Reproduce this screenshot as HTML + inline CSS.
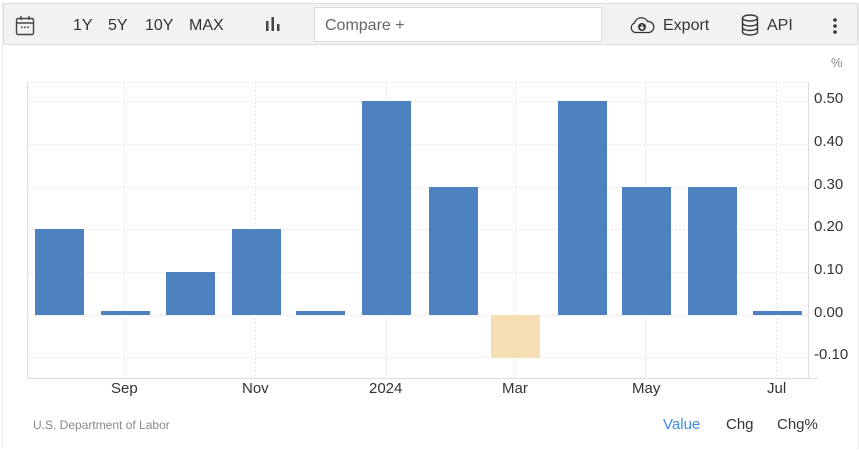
<!DOCTYPE html><html><head><style>
body{margin:0;width:859px;height:451px;background:#fff;font-family:"Liberation Sans",sans-serif;position:relative;overflow:hidden}
.t{position:absolute;font-size:15px;color:#333;white-space:nowrap}
</style></head><body>
<div style="position:absolute;left:2px;top:3px;width:855px;height:446px;border-left:1px solid #eee;border-right:1px solid #eee"></div>
<div style="position:absolute;left:3px;top:3px;width:853px;height:40px;background:#f2f2f2;border:1px solid #ddd"></div>
<svg style="position:absolute;left:15px;top:15px" width="20" height="22" viewBox="0 0 20 22"><rect x="1.5" y="3.5" width="17" height="16" rx="1.5" fill="none" stroke="#444" stroke-width="1.4"/><line x1="1.5" y1="8" x2="18.5" y2="8" stroke="#444" stroke-width="1.4"/><line x1="6" y1="1" x2="6" y2="5" stroke="#444" stroke-width="1.4"/><line x1="14" y1="1" x2="14" y2="5" stroke="#444" stroke-width="1.4"/><rect x="6" y="11.5" width="1.6" height="1.6" fill="#444"/><rect x="9.2" y="11.5" width="1.6" height="1.6" fill="#444"/><rect x="12.4" y="11.5" width="1.6" height="1.6" fill="#444"/></svg>
<div class="t" style="left:73px;top:17px;font-size:16px">1Y</div>
<div class="t" style="left:108px;top:17px;font-size:16px">5Y</div>
<div class="t" style="left:145px;top:17px;font-size:16px">10Y</div>
<div class="t" style="left:189px;top:17px;font-size:16px">MAX</div>
<svg style="position:absolute;left:265px;top:16px" width="16" height="16"><rect x="1" y="5" width="2.5" height="10" fill="#444"/><rect x="6.5" y="1" width="2.5" height="14" fill="#444"/><rect x="12" y="8" width="2.5" height="7" fill="#444"/></svg>
<div style="position:absolute;left:314px;top:7px;width:286px;height:33px;background:#fff;border:1px solid #ddd"></div>
<div class="t" style="left:325px;top:17px;font-size:16px;color:#666">Compare +</div>
<svg style="position:absolute;left:629px;top:16px" width="26" height="18" viewBox="0 0 26 18"><path d="M6 16.5 A5 5 0 0 1 5.5 7 A7 7 0 0 1 18.5 5.5 A5.5 5.5 0 0 1 20 16.5 Z" fill="none" stroke="#333" stroke-width="1.3"/><circle cx="13" cy="11" r="4" fill="#333"/><path d="M13 8.5v4M11 11l2 2 2-2" stroke="#fff" stroke-width="1.2" fill="none"/></svg>
<div class="t" style="left:663px;top:17px;font-size:16px">Export</div>
<svg style="position:absolute;left:741px;top:14px" width="18" height="22" viewBox="0 0 18 22"><ellipse cx="9" cy="4" rx="7.5" ry="3" fill="none" stroke="#333" stroke-width="1.4"/><path d="M1.5 4v14c0 1.7 3.4 3 7.5 3s7.5-1.3 7.5-3V4M1.5 9c0 1.7 3.4 3 7.5 3s7.5-1.3 7.5-3M1.5 13.5c0 1.7 3.4 3 7.5 3s7.5-1.3 7.5-3" fill="none" stroke="#333" stroke-width="1.4"/></svg>
<div class="t" style="left:767px;top:17px;font-size:16px">API</div>
<svg style="position:absolute;left:832px;top:17px" width="6" height="18"><circle cx="3" cy="3" r="1.8" fill="#333"/><circle cx="3" cy="9" r="1.8" fill="#333"/><circle cx="3" cy="15" r="1.8" fill="#333"/></svg>
<svg style="position:absolute;left:0;top:0" width="859" height="451">
<g stroke="#e6e6e6" stroke-dasharray="2,2" stroke-width="1">
<line x1="27" x2="808" y1="82.5" y2="82.5"/><line x1="27" x2="808" y1="101.5" y2="101.5"/><line x1="27" x2="808" y1="144.5" y2="144.5"/><line x1="27" x2="808" y1="187.5" y2="187.5"/><line x1="27" x2="808" y1="229.5" y2="229.5"/><line x1="27" x2="808" y1="272.5" y2="272.5"/><line x1="27" x2="808" y1="315.5" y2="315.5"/><line x1="27" x2="808" y1="357.5" y2="357.5"/>
<line x1="124.5" x2="124.5" y1="82" y2="378"/><line x1="255.5" x2="255.5" y1="82" y2="378"/><line x1="386.5" x2="386.5" y1="82" y2="378"/><line x1="515.5" x2="515.5" y1="82" y2="378"/><line x1="645.5" x2="645.5" y1="82" y2="378"/><line x1="776.5" x2="776.5" y1="82" y2="378"/>
</g>
<line x1="27.5" x2="27.5" y1="82" y2="378" stroke="#ddd"/>
<line x1="808.5" x2="808.5" y1="82" y2="378" stroke="#ddd"/>
<line x1="27" x2="818" y1="378.5" y2="378.5" stroke="#ddd"/>
<g fill="#4d81bf">
<rect x="35" y="229" width="49" height="86"/><rect x="101" y="311" width="49" height="4"/><rect x="166" y="272" width="49" height="43"/><rect x="232" y="229" width="49" height="86"/><rect x="296" y="311" width="49" height="4"/><rect x="362" y="101" width="49" height="214"/><rect x="429" y="187" width="49" height="128"/><rect x="558" y="101" width="49" height="214"/><rect x="622" y="187" width="49" height="128"/><rect x="688" y="187" width="49" height="128"/><rect x="753" y="311" width="49" height="4"/>
</g>
<rect x="491" y="315" width="49" height="43" fill="#f5deb3"/>
</svg>
<div class="t" style="left:831px;top:55px;font-size:13px;color:#888">%</div>
<div class="t" style="left:814px;top:90px">0.50</div>
<div class="t" style="left:814px;top:133px">0.40</div>
<div class="t" style="left:814px;top:176px">0.30</div>
<div class="t" style="left:814px;top:218px">0.20</div>
<div class="t" style="left:814px;top:261px">0.10</div>
<div class="t" style="left:814px;top:304px">0.00</div>
<div class="t" style="left:814px;top:346px">-0.10</div>
<div class="t" style="left:111px;top:380px">Sep</div>
<div class="t" style="left:242px;top:380px">Nov</div>
<div class="t" style="left:369px;top:380px">2024</div>
<div class="t" style="left:502px;top:380px">Mar</div>
<div class="t" style="left:632px;top:380px">May</div>
<div class="t" style="left:767px;top:380px">Jul</div>
<div class="t" style="left:33px;top:418px;font-size:12px;color:#888">U.S. Department of Labor</div>
<div class="t" style="left:663px;top:416px;color:#3c8ee6">Value</div>
<div class="t" style="left:726px;top:416px">Chg</div>
<div class="t" style="left:777px;top:416px">Chg%</div>
</body></html>
